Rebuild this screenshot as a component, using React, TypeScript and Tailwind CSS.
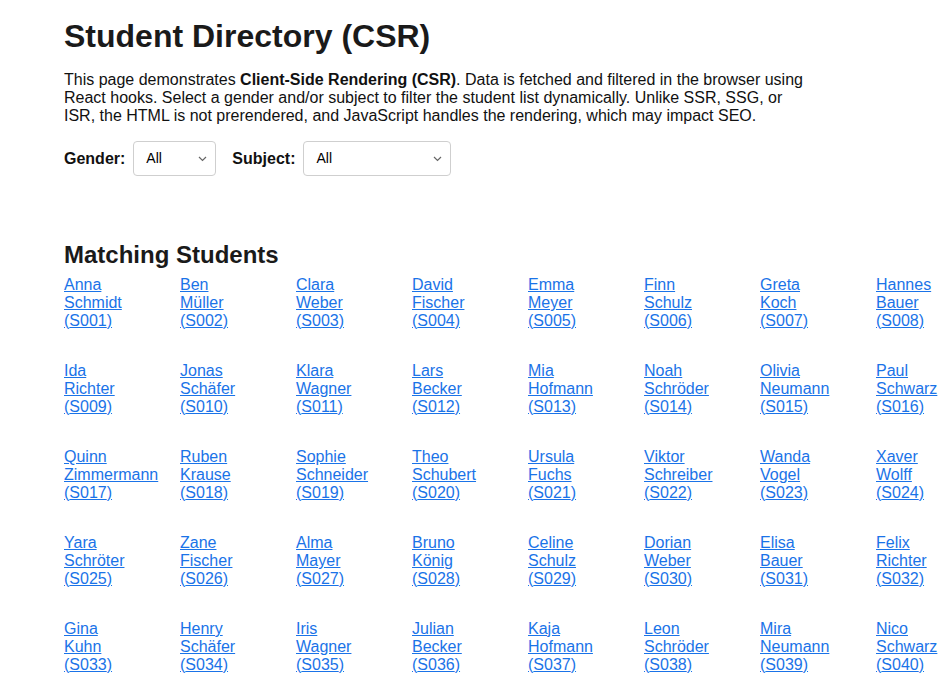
import React from "react";

const students: [string, string][] = [
  ["Anna Schmidt", "S001"], ["Ben Müller", "S002"], ["Clara Weber", "S003"], ["David Fischer", "S004"],
  ["Emma Meyer", "S005"], ["Finn Schulz", "S006"], ["Greta Koch", "S007"], ["Hannes Bauer", "S008"],
  ["Ida Richter", "S009"], ["Jonas Schäfer", "S010"], ["Klara Wagner", "S011"], ["Lars Becker", "S012"],
  ["Mia Hofmann", "S013"], ["Noah Schröder", "S014"], ["Olivia Neumann", "S015"], ["Paul Schwarz", "S016"],
  ["Quinn Zimmermann", "S017"], ["Ruben Krause", "S018"], ["Sophie Schneider", "S019"], ["Theo Schubert", "S020"],
  ["Ursula Fuchs", "S021"], ["Viktor Schreiber", "S022"], ["Wanda Vogel", "S023"], ["Xaver Wolff", "S024"],
  ["Yara Schröter", "S025"], ["Zane Fischer", "S026"], ["Alma Mayer", "S027"], ["Bruno König", "S028"],
  ["Celine Schulz", "S029"], ["Dorian Weber", "S030"], ["Elisa Bauer", "S031"], ["Felix Richter", "S032"],
  ["Gina Kuhn", "S033"], ["Henry Schäfer", "S034"], ["Iris Wagner", "S035"], ["Julian Becker", "S036"],
  ["Kaja Hofmann", "S037"], ["Leon Schröder", "S038"], ["Mira Neumann", "S039"], ["Nico Schwarz", "S040"],
];

function Select({ width }: { width: string }) {
  return (
    <div className={`relative ${width} h-[35px]`}>
      <select className="appearance-none w-full h-full border border-[#cfcfcf] rounded-[4px] bg-white pl-3 pr-8 text-[14px] text-black outline-none">
        <option>All</option>
      </select>
      <svg className="absolute right-[9px] top-[15px] pointer-events-none" width="9" height="6" viewBox="0 0 9 6">
        <path d="M1 1 L4.5 4.5 L8 1" fill="none" stroke="#666" strokeWidth="1.2" />
      </svg>
    </div>
  );
}

export default function App() {
  return (
    <div className="bg-white min-h-[694px] overflow-hidden text-[#111] pl-16 pt-[18px]" style={{ fontFamily: '"Liberation Sans", Arial, sans-serif' }}>
      <h1 className="text-[32px] leading-[37px] font-bold text-[#1a1a1a]">Student Directory (CSR)</h1>
      <p className="mt-[16px] text-[16px] leading-[18px] w-[750px] text-[#111]">
        This page demonstrates <b>Client-Side Rendering (CSR)</b>. Data is fetched and filtered in the browser using React hooks. Select a gender and/or subject to filter the student list dynamically. Unlike SSR, SSG, or ISR, the HTML is not prerendered, and JavaScript handles the rendering, which may impact SEO.
      </p>
      <div className="mt-[16px] flex items-center text-[16px]">
        <label className="font-bold mr-2">Gender:</label>
        <Select width="w-[83px]" />
        <label className="font-bold ml-4 mr-2">Subject:</label>
        <Select width="w-[148px]" />
      </div>
      <h2 className="mt-[65px] text-[24px] leading-[28px] font-bold text-[#1a1a1a]">Matching Students</h2>
      <div className="mt-[7px] grid grid-cols-[repeat(8,100px)] gap-x-4 gap-y-8 w-[928px]">
        {students.map(([name, id]) => (
          <div key={id}>
            <a href="#" className="block w-min text-[16px] leading-[18px] text-[#1a73e8] underline">
              {name} ({id})
            </a>
          </div>
        ))}
      </div>
    </div>
  );
}
